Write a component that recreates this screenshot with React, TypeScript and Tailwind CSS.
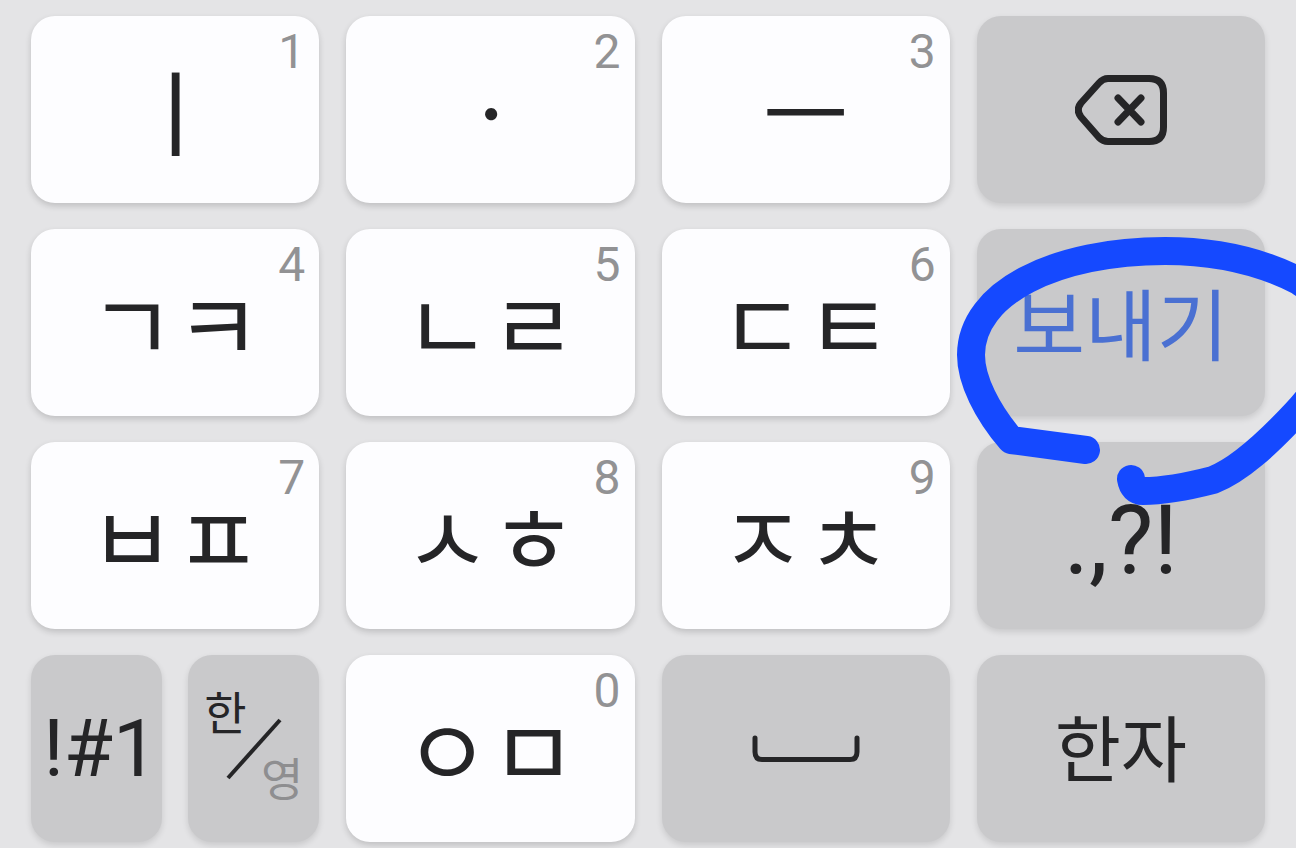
import clsx from 'clsx'
import type { ReactNode } from 'react'

const letterKeys = {
  vowels: [
    { label: 'ㅣ', digit: '1' },
    { label: 'ㆍ', digit: '2' },
    { label: 'ㅡ', digit: '3' },
  ],
  velars: [
    { label: 'ㄱㅋ', digit: '4' },
    { label: 'ㄴㄹ', digit: '5' },
    { label: 'ㄷㅌ', digit: '6' },
  ],
  labials: [
    { label: 'ㅂㅍ', digit: '7' },
    { label: 'ㅅㅎ', digit: '8' },
    { label: 'ㅈㅊ', digit: '9' },
  ],
}

function LetterKey({ label, digit }: { label: string; digit: string }) {
  return (
    <button
      type="button"
      className="relative flex items-center justify-center rounded-3xl bg-[#fdfdff] pb-1 shadow-[0_3px_6px_rgba(0,0,0,0.16)]"
    >
      <span className="text-[94px] leading-none whitespace-nowrap">{label}</span>
      <span className="absolute top-2 right-3.5 font-[Roboto,sans-serif] text-5xl leading-14 text-[#929294]">
        {digit}
      </span>
    </button>
  )
}

function ActionKey({ name, className, children }: { name?: string; className?: string; children: ReactNode }) {
  return (
    <button
      type="button"
      aria-label={name}
      className={clsx(
        'flex items-center justify-center rounded-3xl bg-[#c9c9cb] whitespace-nowrap shadow-[0_3px_6px_rgba(0,0,0,0.12)]',
        className
      )}
    >
      {children}
    </button>
  )
}

function BackspaceIcon() {
  return (
    <svg width="92" height="70" viewBox="0 0 92 70" fill="none" stroke="currentColor" strokeWidth="7" strokeLinecap="round" strokeLinejoin="round">
      <path d="M33 3.5H74Q88.500 3.500 88.500 18V52Q88.500 66.500 74 66.500H33Q28 66.500 24 62.500L6 42Q0.500 35 6 28L24 8Q28 3.500 33 3.500Z" />
      <path d="M43 23L66 47M66 23L43 47" />
    </svg>
  )
}

function SpaceIcon() {
  return (
    <svg width="108" height="28" viewBox="0 0 108 28" fill="none" stroke="currentColor" strokeWidth="5" strokeLinecap="round">
      <path d="M3 3V17Q3 24.500 10 24.500H98Q105 24.500 105 17V3" />
    </svg>
  )
}

// Hand-drawn loop around the send key
function MarkerLoop() {
  return (
    <svg
      aria-hidden="true"
      className="pointer-events-none absolute top-0 left-0 z-10 overflow-visible"
      width="288"
      height="187"
      viewBox="0 0 288 187"
      fill="none"
      stroke="#1549ff"
      strokeWidth="28"
      strokeLinecap="round"
      strokeLinejoin="round"
    >
      <path d="M109 221L34 211C10 183 -6 151 -6 126C-6 63 80 22 188 22C240 22 285 33 322 52C376 88 366 133 319 184C290 215 262 241 236 251C205 259 180 262 166 262Q156 262 154 250" />
    </svg>
  )
}

export default function App() {
  return (
    <main className="overflow-hidden bg-[#e4e4e6] px-[31px] pt-4 pb-2 font-['Noto_Sans_CJK_KR',sans-serif] text-[#252527]">
      <div className="grid auto-rows-[187px] grid-cols-4 gap-x-[27px] gap-y-[26px]">
        {letterKeys.vowels.map((key) => (
          <LetterKey key={key.digit} {...key} />
        ))}
        <ActionKey name="지우기">
          <BackspaceIcon />
        </ActionKey>

        {letterKeys.velars.map((key) => (
          <LetterKey key={key.digit} {...key} />
        ))}
        <div className="relative grid">
          <ActionKey className="pb-1 text-[78px] leading-none text-[#4a70d2]">보내기</ActionKey>
          <MarkerLoop />
        </div>

        {letterKeys.labials.map((key) => (
          <LetterKey key={key.digit} {...key} />
        ))}
        <ActionKey className="pt-2 font-[Roboto,sans-serif] text-8xl leading-none">.,?!</ActionKey>

        <div className="grid grid-cols-2 gap-[26px]">
          <ActionKey className="pl-2 font-[Roboto,sans-serif] text-[80px] leading-none">!#1</ActionKey>
          <ActionKey name="한/영" className="flex-col px-4 pb-3">
            <span className="self-start text-[46px] leading-10">한</span>
            <svg className="-mt-3 -mb-6" width="56" height="62" viewBox="0 0 56 62" stroke="currentColor" strokeWidth="4">
              <path d="M54 2L2 60" />
            </svg>
            <span className="self-end text-[46px] leading-10 text-[#8e8e90]">영</span>
          </ActionKey>
        </div>
        <LetterKey label="ㅇㅁ" digit="0" />
        <ActionKey name="스페이스">
          <SpaceIcon />
        </ActionKey>
        <ActionKey className="pb-2 text-[72px] leading-none">한자</ActionKey>
      </div>
    </main>
  )
}
